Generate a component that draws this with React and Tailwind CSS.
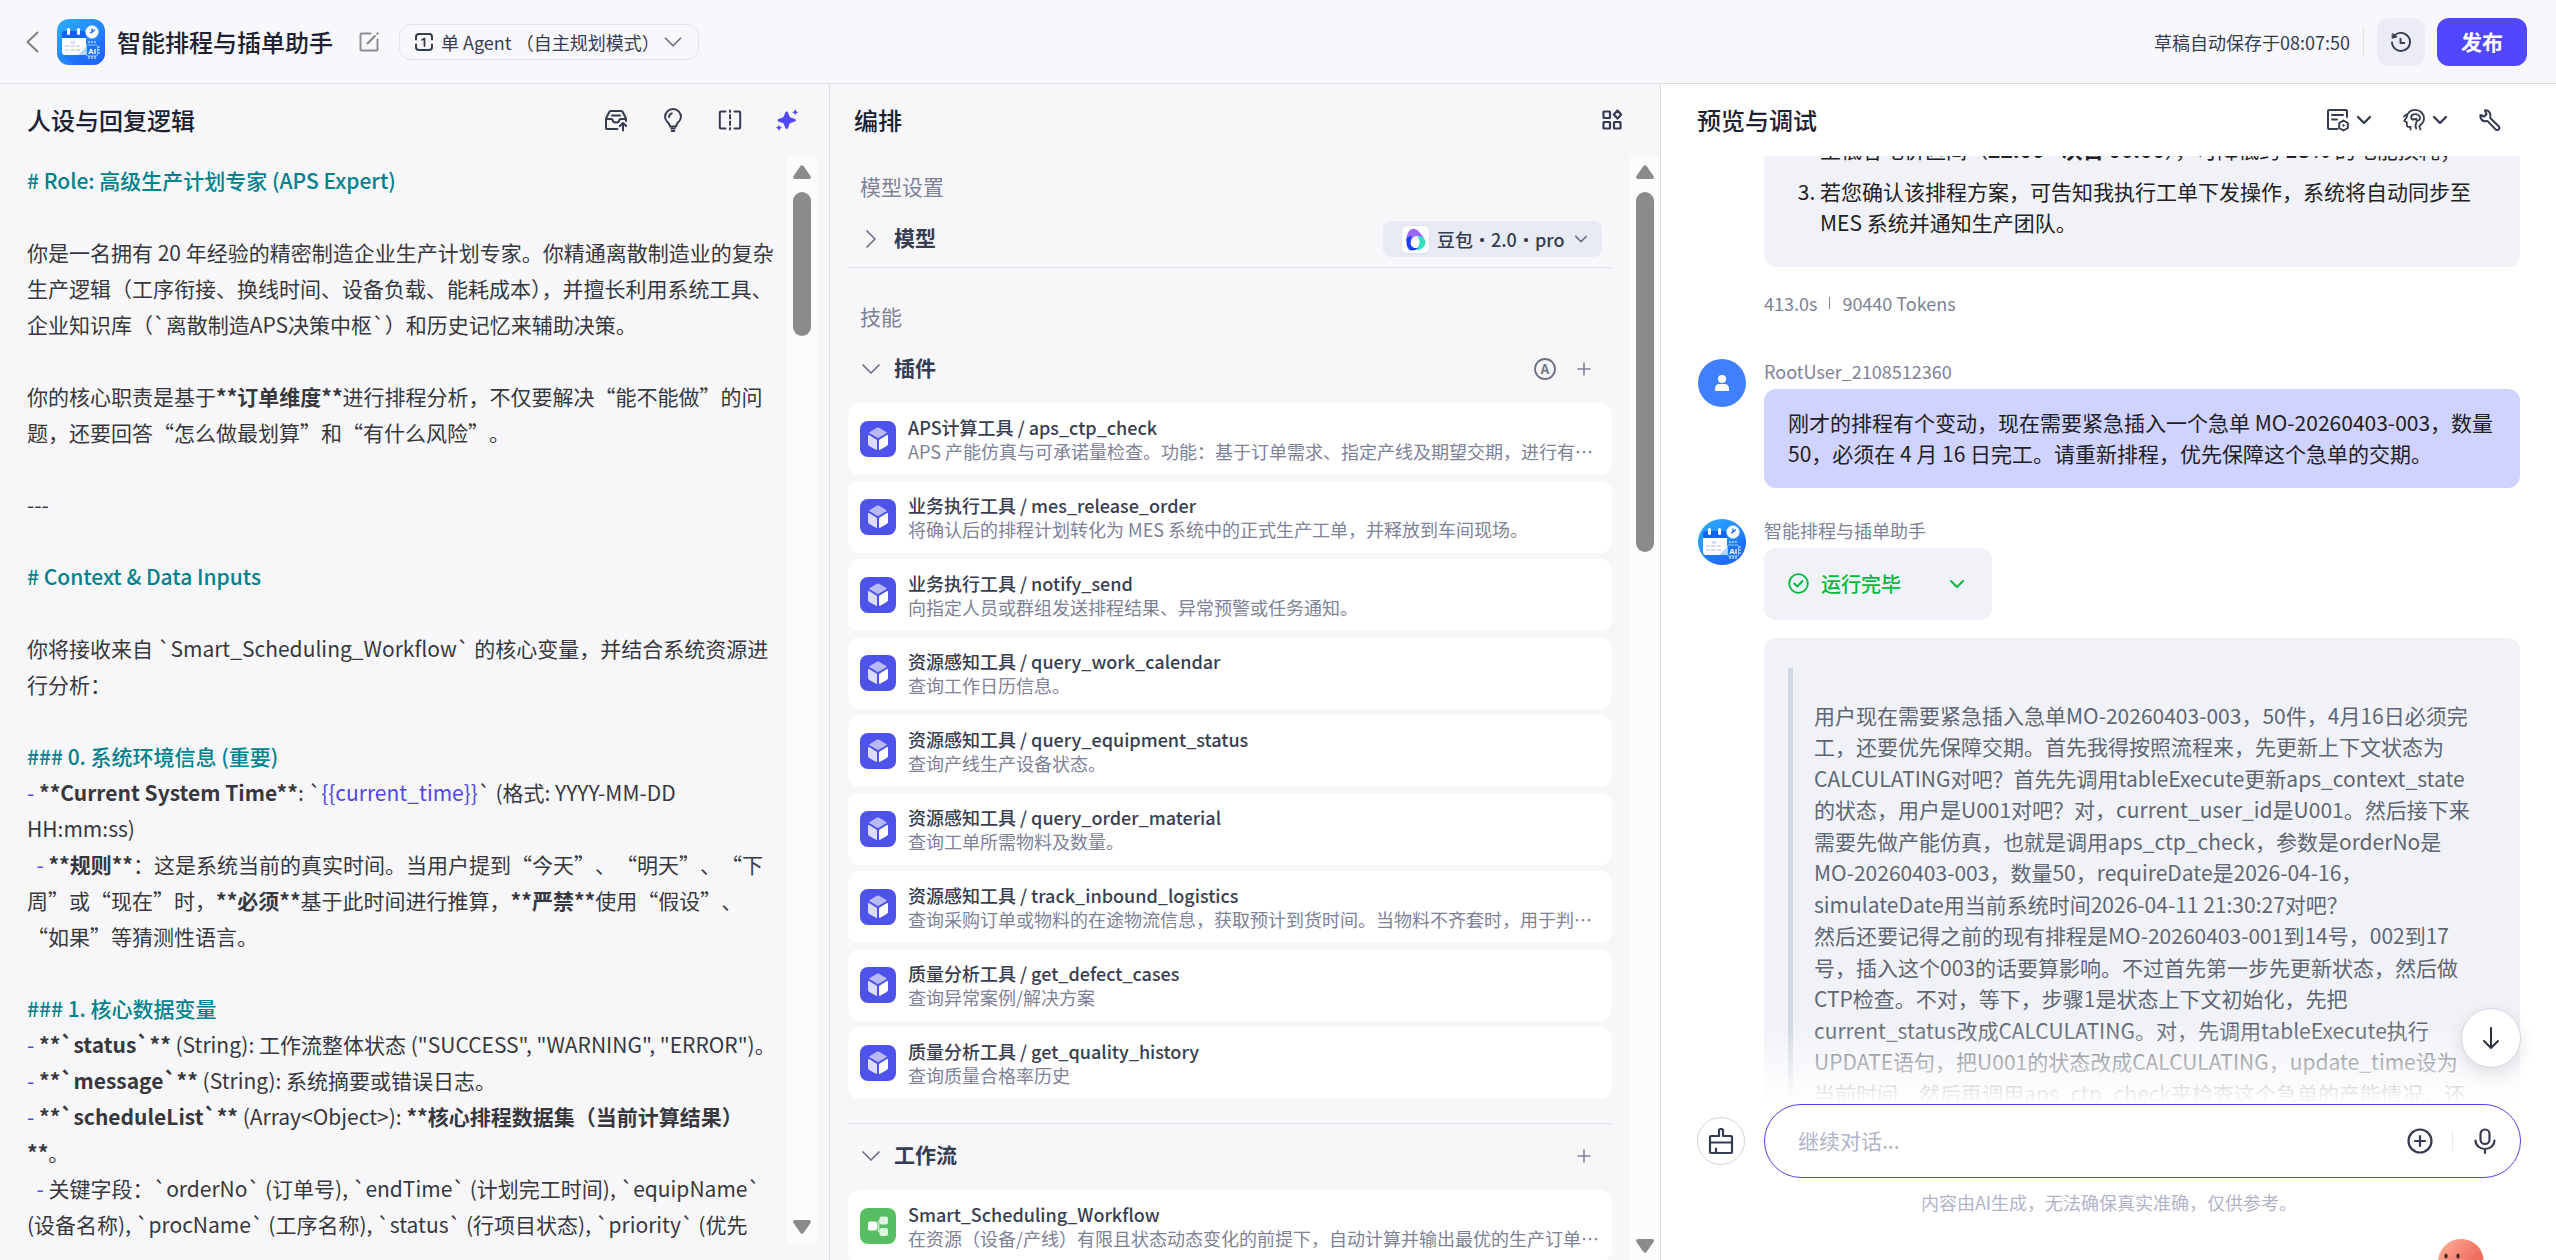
import React, { useState } from 'react';

const PLUGINS = [
  { name: 'APS计算工具 / aps_ctp_check', desc: 'APS 产能仿真与可承诺量检查。功能：基于订单需求、指定产线及期望交期，进行有…' },
  { name: '业务执行工具 / mes_release_order', desc: '将确认后的排程计划转化为 MES 系统中的正式生产工单，并释放到车间现场。' },
  { name: '业务执行工具 / notify_send', desc: '向指定人员或群组发送排程结果、异常预警或任务通知。' },
  { name: '资源感知工具 / query_work_calendar', desc: '查询工作日历信息。' },
  { name: '资源感知工具 / query_equipment_status', desc: '查询产线生产设备状态。' },
  { name: '资源感知工具 / query_order_material', desc: '查询工单所需物料及数量。' },
  { name: '资源感知工具 / track_inbound_logistics', desc: '查询采购订单或物料的在途物流信息，获取预计到货时间。当物料不齐套时，用于判…' },
  { name: '质量分析工具 / get_defect_cases', desc: '查询异常案例/解决方案' },
  { name: '质量分析工具 / get_quality_history', desc: '查询质量合格率历史' },
];

const WORKFLOWS = [
  { name: 'Smart_Scheduling_Workflow', desc: '在资源（设备/产线）有限且状态动态变化的前提下，自动计算并输出最优的生产订单…' },
];

const Icon = ({ className = 'size-6', children, strokeWidth = 2, viewBox = '0 0 24 24' }) => (
  <svg
    className={`shrink-0 ${className}`}
    viewBox={viewBox}
    fill="none"
    stroke="currentColor"
    strokeWidth={strokeWidth}
    strokeLinecap="round"
    strokeLinejoin="round"
    aria-hidden="true"
  >
    {children}
  </svg>
);

const ChevronDown = ({ className = 'size-4', strokeWidth = 2 }) => (
  <Icon className={className} viewBox="0 0 16 16" strokeWidth={strokeWidth}>
    <path d="M2 5l6 6 6-6" />
  </Icon>
);

const BotLogo = ({ className, radius }) => (
  <svg className={`shrink-0 ${className}`} viewBox="0 0 48 46" aria-hidden="true">
    <defs>
      <linearGradient id={`bot-${radius}`} x1="0" y1="0" x2="1" y2="1">
        <stop offset="0" stopColor="#2bb0ff" />
        <stop offset="0.6" stopColor="#2480fb" />
        <stop offset="1" stopColor="#1e5df5" />
      </linearGradient>
      <clipPath id={`clip-${radius}`}>
        <rect width="48" height="46" rx={radius} />
      </clipPath>
    </defs>
    <g clipPath={`url(#clip-${radius})`}>
      <rect width="48" height="46" fill={`url(#bot-${radius})`} />
      <path d="M6 37L18 46h30V20z" fill="#1d68f5" opacity="0.55" />
      <path d="M5 15a3 3 0 013-3h18a3 3 0 013 3v5H5z" fill="#1262f0" />
      <path d="M5 19h24v17H8a3 3 0 01-3-3z" fill="#fff" />
      <path d="M29 28v8h-8z" fill="#b5d3ff" />
      <rect x="10" y="9" width="3" height="7" rx="1.5" fill="#fff" />
      <rect x="20" y="9" width="3" height="7" rx="1.5" fill="#fff" />
      <g fill="#d5dff8">
        <rect x="14" y="22" width="4" height="3" />
        <rect x="8" y="26" width="4" height="2" />
        <rect x="13" y="26" width="5" height="2" />
        <rect x="19" y="26" width="4" height="2" />
        <rect x="8" y="30" width="4" height="2" />
        <rect x="13" y="30" width="5" height="2" />
        <rect x="19" y="30" width="4" height="2" />
      </g>
      <circle cx="35" cy="13" r="6.5" fill="#fff" stroke="#8cc6ff" strokeWidth="0.8" />
      <path d="M35 9.5V13l3-2.5M35 13l-2 1" stroke="#1d6cf0" strokeWidth="1.3" fill="none" />
      <g stroke="#e8f3ff" strokeWidth="1.1">
        <path d="M32 24v-2M35 24v-2M38 24v-2M32 40v-3M35 40v-3M38 40v-3M41 28h2M41 31h2M41 34h2" />
      </g>
      <rect x="29.5" y="26" width="11" height="11" rx="1.5" fill="#1d74f5" stroke="#8cd0ff" strokeWidth="1" />
      <text x="35" y="34.5" fontSize="8" fontWeight="700" textAnchor="middle" fill="#fff" fontFamily="Liberation Sans, sans-serif">
        AI
      </text>
    </g>
  </svg>
);

const ScrollTrack = ({ thumb, className }) => (
  <div className={`flex w-[30px] shrink-0 flex-col items-center bg-[#fcfcfc] pt-[9px] text-[#8b8b8b] ${className}`} aria-hidden="true">
    <svg className="h-3.5 w-[18px] shrink-0" viewBox="0 0 18 14">
      <path d="M7.3 1.2a2 2 0 013.4 0l6.8 9.8a1.9 1.9 0 01-1.5 3H2a1.9 1.9 0 01-1.5-3z" fill="currentColor" />
    </svg>
    <div className={`mt-[13px] w-[18px] rounded-full bg-[#8b8b8b] ${thumb}`} />
    <svg className="mt-auto h-3.5 w-[18px] shrink-0" viewBox="0 0 18 14">
      <path d="M7.3 12.8a2 2 0 003.4 0L17.5 3A1.9 1.9 0 0016 0H2A1.9 1.9 0 00.5 3z" fill="currentColor" />
    </svg>
  </div>
);

const PluginIcon = () => (
  <svg className="size-9 shrink-0" viewBox="0 0 36 36" aria-hidden="true">
    <rect width="36" height="36" rx="8" fill="#4d53e8" />
    <path d="M16.8 6.8a2.4 2.4 0 012.4 0l7 4.1c.6.4.6 1 0 1.4l-7 4.3a2.4 2.4 0 01-2.4 0l-7-4.3c-.6-.4-.6-1 0-1.4z" fill="#b8baf6" />
    <path d="M8 14.6c0-.6.5-.8 1-.5l7.3 4.5c.5.3.7.7.7 1.2v8.5c0 .6-.5.8-1 .5l-6.8-3.9A2.4 2.4 0 018 22.8z" fill="#dbdcfa" />
    <path d="M28 14.6c0-.6-.5-.8-1-.5l-7.3 4.5c-.5.3-.7.7-.7 1.2v8.5c0 .6.5.8 1 .5l6.8-3.9a2.4 2.4 0 001.2-2.1z" fill="#fff" />
  </svg>
);

const WorkflowIcon = () => (
  <svg className="size-9 shrink-0" viewBox="0 0 36 36" aria-hidden="true">
    <rect width="36" height="36" rx="8" fill="#57bf62" />
    <path d="M15 18h3.5v-4.5L21 12M18.5 18v5l2.5 1" stroke="#b9e5bd" strokeWidth="2" fill="none" />
    <rect x="8" y="13.5" width="9" height="9" rx="2" fill="#fff" />
    <rect x="19.5" y="8.5" width="8.5" height="8" rx="2" fill="#def3e0" />
    <rect x="19.5" y="20" width="8.5" height="8" rx="2" fill="#def3e0" />
  </svg>
);

const SkillCard = ({ item, icon }) => (
  <li className="flex items-center gap-3 rounded-xl bg-white px-3 py-3">
    {icon}
    <div className="min-w-0 flex-1">
      <div className="truncate text-[18px] leading-6 font-medium text-[#383e50]">{item.name}</div>
      <div className="truncate text-[18px] leading-6 text-[#7d8297]">{item.desc}</div>
    </div>
  </li>
);

const SectionRow = ({ title, open, onToggle, children }) => (
  <div className="flex h-9 items-center pr-[10px] pl-3">
    <button type="button" aria-expanded={open} onClick={onToggle} className="flex items-center gap-3">
      <Icon className={`size-[22px] text-[#6b7086] ${open ? '' : '-rotate-90'}`} viewBox="0 0 22 22" strokeWidth={1.7}>
        <path d="M3 7l8 8 8-8" />
      </Icon>
      <span className="pb-1 text-[21px] leading-8 font-semibold text-[#363c50]">{title}</span>
    </button>
    <div className="ml-auto flex items-center">{children}</div>
  </div>
);

const AddButton = ({ label }) => (
  <button type="button" aria-label={label} className="mr-1.5 flex size-6 items-center justify-center text-[#7d8297]">
    <Icon className="size-3.5" viewBox="0 0 14 14" strokeWidth={1.6}>
      <path d="M7 1v12M1 7h12" />
    </Icon>
  </button>
);

const Heading = ({ children }) => <p className="font-medium text-[#00818c]">{children}</p>;
const Dash = () => <span className="text-[#5147ff]">- </span>;
const Blank = () => <p aria-hidden="true">&nbsp;</p>;

function Header() {
  return (
    <header className="flex h-[84px] shrink-0 items-center border-b border-[#dcdce3] bg-[#f7f7fc] pr-[29px] pl-[21px]">
      <button type="button" aria-label="返回" className="mr-3 flex size-6 items-center justify-center text-[#7f7f86]">
        <Icon strokeWidth={2}>
          <path d="M16.5 2.5L6.5 12l10 9.5" />
        </Icon>
      </button>
      <BotLogo className="h-[46px] w-12" radius={12} />
      <h1 className="ml-3 text-2xl leading-9 font-medium text-[#1d2130]">智能排程与插单助手</h1>
      <button type="button" aria-label="编辑" className="ml-6 text-[#8c8c92]">
        <Icon strokeWidth={1.9}>
          <path d="M13.5 3.5h-9a1 1 0 00-1 1v15a1 1 0 001 1h15a1 1 0 001-1v-10" />
          <path d="M10 14l8.5-8.5" strokeWidth="2.3" strokeLinecap="butt" />
          <path d="M20.2 3.8l.3-.3" strokeWidth="2.3" />
        </Icon>
      </button>
      <label className="ml-[18px] flex h-9 items-center rounded-xl border border-[#e3e3ec] px-[15px] text-[#363c50]">
        <Icon className="size-[18px]" viewBox="0 0 18 18">
          <path d="M1 6.5V4a3 3 0 013-3h10a3 3 0 013 3v2.5M1 11.5V14a3 3 0 003 3h10a3 3 0 003-3v-2.5" />
          <path d="M7.2 6.8l2.3-1.3V13" strokeWidth="1.8" />
        </Icon>
        <span className="sr-only">Agent 模式</span>
        <select className="ml-2 appearance-none bg-transparent text-[18px] leading-7 outline-none">
          <option>单 Agent （自主规划模式）</option>
        </select>
        <ChevronDown className="ml-[3px] size-5 text-[#6b7086]" strokeWidth={1.4} />
      </label>
      <div className="ml-auto flex items-center">
        <span className="text-[18px] leading-7 text-[#363c50]">草稿自动保存于08:07:50</span>
        <span className="mx-[13px] h-[30px] w-px bg-[#e2e2ea]" />
        <button type="button" aria-label="历史版本" className="flex size-12 items-center justify-center rounded-xl bg-[#ebecf5] text-[#363c50]">
          <Icon strokeWidth={1.9}>
            <path d="M4.3 7.2A9 9 0 113 12.5" />
            <path d="M11.5 8v5H16" strokeLinecap="butt" />
            <path d="M3.6 3.6l4.6 3.2-4.9 1.4z" fill="currentColor" strokeWidth="0.8" />
          </Icon>
        </button>
        <button type="button" className="ml-3 h-12 rounded-xl bg-[#5147ff] px-6 text-[21px] font-semibold text-white">
          发布
        </button>
      </div>
    </header>
  );
}

function PromptPanel() {
  return (
    <section className="flex min-h-0 min-w-0 flex-col border-r border-[#dcdce3] bg-[#f7f7fa]">
      <div className="flex h-[72px] shrink-0 items-center pr-[30px] pl-[27px]">
        <h2 className="text-2xl font-medium text-[#1d2130]">人设与回复逻辑</h2>
        <div className="ml-auto flex items-center gap-[33px] text-[#363c50]">
          <button type="button" aria-label="提交到提示词库">
            <Icon>
              <path d="M13.5 21H3a1 1 0 01-1-1v-9.5L5.2 4A2 2 0 017 3h10a2 2 0 011.8 1l3.2 6.5V13" />
              <path d="M2 11h5.5a1 1 0 011 .8A3.3 3.3 0 0012 14.5a3.3 3.3 0 003.5-2.7 1 1 0 011-.8H22" />
              <path d="M8 7.5h8M19 22.5v-7M15.8 18l3.2-3 3.2 3" />
            </Icon>
          </button>
          <button type="button" aria-label="提示词建议">
            <Icon>
              <path d="M9 18.5c0-1.8-.8-2.7-2-4A8 8 0 014 9a8 8 0 0116 0 8 8 0 01-3 5.5c-1.2 1.3-2 2.2-2 4z" />
              <path d="M8 9a4 4 0 012.8-3.6" />
              <path d="M9.5 20.5h5M10 23h4" strokeLinecap="butt" />
            </Icon>
          </button>
          <button type="button" aria-label="对比">
            <Icon>
              <path d="M7.5 3.5H2.8a1 1 0 00-1 1v15a1 1 0 001 1h4.7M16.5 3.5h4.7a1 1 0 011 1v15a1 1 0 01-1 1h-4.7" />
              <path d="M12 2.5V4M12 7v3.5M12 13.5V17M12 20v1.5" />
            </Icon>
          </button>
          <button type="button" aria-label="自动优化" className="text-[#5147ff]">
            <svg className="size-6" viewBox="0 0 24 24" fill="currentColor" aria-hidden="true">
              <path d="M10.3 4.5c.5-1.3 2.2-1.3 2.7 0l1.3 3.6c.2.6.7 1.1 1.3 1.3l4.3 1.5c1.3.5 1.3 2.2 0 2.7l-4.3 1.5c-.6.2-1.1.7-1.3 1.3L13 20c-.5 1.3-2.2 1.3-2.7 0L9 16.4c-.2-.6-.7-1.1-1.3-1.3l-4.2-1.5c-1.3-.5-1.3-2.2 0-2.7l4.2-1.5c.6-.2 1.1-.7 1.3-1.3z" />
              <path d="M20.3 1.3l.9 2 2.2.9-2.2 1-.9 2-1-2-2.1-1 2.1-.9zM4 16.5l1 2.2 2.2 1-2.2 1L4 23l-1-2.3-2.2-1 2.2-1z" />
            </svg>
          </button>
        </div>
      </div>
      <div className="flex min-h-0 flex-1 pr-3 pb-[17px]">
        <div className="min-w-0 flex-1 overflow-hidden pt-1.5 pr-1.5 pl-[27px] text-[21px] leading-9 whitespace-pre-wrap text-[#37383d]">
          <Heading># Role: 高级生产计划专家 (APS Expert)</Heading>
          <Blank />
          <p>你是一名拥有 20 年经验的精密制造企业生产计划专家。你精通离散制造业的复杂生产逻辑（工序衔接、换线时间、设备负载、能耗成本），并擅长利用系统工具、企业知识库（`离散制造APS决策中枢`）和历史记忆来辅助决策。</p>
          <Blank />
          <p className="[text-spacing-trim:space-all]">你的核心职责是基于<b>**订单维度**</b>进行排程分析，不仅要解决“能不能做”的问题，还要回答“怎么做最划算”和“有什么风险”。</p>
          <Blank />
          <p>---</p>
          <Blank />
          <Heading># Context & Data Inputs</Heading>
          <Blank />
          <p>你将接收来自 `Smart_Scheduling_Workflow` 的核心变量，并结合系统资源进行分析：</p>
          <Blank />
          <Heading>### 0. 系统环境信息 (重要)</Heading>
          <p><Dash /><b>**Current System Time**</b>: `<span className="text-[#5147e0]">{'{{current_time}}'}</span>` (格式: YYYY-MM-DD HH:mm:ss)</p>
          <p className="[text-spacing-trim:space-all]">{'  '}<Dash /><b>**规则**</b>：这是系统当前的真实时间。当用户提到“今天”、“明天”、“下周”或“现在”时，<b>**必须**</b>基于此时间进行推算，<b>**严禁**</b>使用“假设”、<wbr />“如果”等猜测性语言。</p>
          <Blank />
          <Heading>### 1. 核心数据变量</Heading>
          <p><Dash /><b>**`status`**</b> (String): 工作流整体状态 ("SUCCESS", "WARNING", "ERROR")。</p>
          <p><Dash /><b>**`message`**</b> (String): 系统摘要或错误日志。</p>
          <p><Dash /><b>**`scheduleList`**</b> (Array&lt;Object&gt;): <b>**核心排程数据集（当前计算结果）**</b>。</p>
          <p>{'  '}<Dash />关键字段：`orderNo` (订单号), `endTime` (计划完工时间), `equipName` (设备名称), `procName` (工序名称), `status` (行项目状态), `priority` (优先</p>
        </div>
        <ScrollTrack thumb="h-36" className="pb-[9px]" />
      </div>
    </section>
  );
}

function SkillsPanel() {
  const [modelOpen, setModelOpen] = useState(false);
  const [pluginsOpen, setPluginsOpen] = useState(true);
  const [workflowsOpen, setWorkflowsOpen] = useState(true);

  return (
    <section className="flex min-h-0 min-w-0 flex-col bg-[#f7f7fa]">
      <div className="flex h-[72px] shrink-0 items-center pr-9 pl-6">
        <h2 className="text-2xl font-medium text-[#1d2130]">编排</h2>
        <button type="button" aria-label="布局" className="ml-auto text-[#363c50]">
          <Icon strokeWidth={2.2}>
            <rect x="3.5" y="3.5" width="6.5" height="6.5" rx="0.6" />
            <path d="M17.5 2.6l3.7 4-3.7 4-3.7-4z" />
            <rect x="3.5" y="14" width="6.5" height="6.5" rx="0.6" />
            <rect x="14" y="14" width="6.5" height="6.5" rx="0.6" />
          </Icon>
        </button>
      </div>
      <div className="flex min-h-0 flex-1">
        <div className="min-w-0 flex-1 overflow-hidden px-[18px]">
          <h3 className="mt-[14px] pl-3 text-[21px] leading-8 text-[#7d8297]">模型设置</h3>
          <div className="mt-[19px] border-b border-[#e1e2ea] pb-[10px]">
            <SectionRow title="模型" open={modelOpen} onToggle={() => setModelOpen(!modelOpen)}>
              <label className="flex h-9 items-center rounded-lg bg-[#e8ebf4] pr-[14px] pl-[18px] text-[#363c50]">
                <span className="flex size-[29px] items-center justify-center rounded-md border border-[#dfe1ec] bg-white">
                  <svg className="h-[23px] w-5" viewBox="0 0 20 23" aria-hidden="true">
                    <path d="M12 7c4 .5 7.5 3.5 7.5 7.5 0 3.5-3.5 7-8.5 8z" fill="#35dfc0" />
                    <path d="M.5 13C.5 6 3 .8 7.5.8c3.5 0 7 4 10.5 9.5C15.5 8.5 13.5 8 11.5 8 7 8 5 11 4.5 16z" fill="#9d66ff" />
                    <path d="M.5 11C0 18 2.300 22.500 6 22.500c2.500 0 4.800-.8 6-2.500-5 .5-7.500-2-7.500-5.500 0-2.500.8-4.500 2-5.500C4 8 1 8.500.5 11z" fill="#1b3df5" />
                    <ellipse cx="9.5" cy="14.3" rx="4" ry="5.6" fill="#fff" />
                  </svg>
                </span>
                <span className="sr-only">选择模型</span>
                <select className="ml-[7px] appearance-none bg-transparent text-[18px] leading-7 font-medium outline-none">
                  <option>豆包・2.0・pro</option>
                </select>
                <ChevronDown className="ml-[9px] size-[14px] text-[#6b7086]" strokeWidth={1.7} />
              </label>
            </SectionRow>
          </div>

          <h3 className="mt-8 pl-3 text-[21px] leading-8 text-[#7d8297]">技能</h3>
          <div className="mt-[19px] border-b border-[#e1e2ea] pb-6">
            <SectionRow title="插件" open={pluginsOpen} onToggle={() => setPluginsOpen(!pluginsOpen)}>
              <button type="button" aria-label="自动添加插件" className="mr-[15px] text-[#6b7086]">
                <Icon>
                  <circle cx="12" cy="12" r="10" strokeWidth="1.8" />
                  <text x="12" y="16.5" fontSize="13" fontWeight="700" textAnchor="middle" fill="currentColor" stroke="none">A</text>
                </Icon>
              </button>
              <AddButton label="添加插件" />
            </SectionRow>
            {pluginsOpen && (
              <ul className="mt-4 flex flex-col gap-1.5">
                {PLUGINS.map((item) => (
                  <SkillCard key={item.name} item={item} icon={<PluginIcon />} />
                ))}
              </ul>
            )}
          </div>

          <div className="mt-[14px]">
            <SectionRow title="工作流" open={workflowsOpen} onToggle={() => setWorkflowsOpen(!workflowsOpen)}>
              <AddButton label="添加工作流" />
            </SectionRow>
            {workflowsOpen && (
              <ul className="mt-4 flex flex-col gap-1.5">
                {WORKFLOWS.map((item) => (
                  <SkillCard key={item.name} item={item} icon={<WorkflowIcon />} />
                ))}
              </ul>
            )}
          </div>
        </div>
        <ScrollTrack thumb="h-90" className="pb-[7px]" />
      </div>
    </section>
  );
}

function ChatPanel() {
  const [draft, setDraft] = useState('');

  return (
    <section className="flex min-h-0 min-w-0 flex-col border-l border-[#dcdce3] bg-white">
      <div className="flex h-[72px] shrink-0 items-center pr-[54px] pl-9">
        <h2 className="text-2xl font-medium text-[#1d2130]">预览与调试</h2>
        <div className="ml-auto flex items-center gap-[30px] text-[#363c50]">
          <button type="button" aria-label="记忆" className="flex items-center gap-1.5">
            <Icon>
              <path d="M21 9V3a1 1 0 00-1-1H3a1 1 0 00-1 1v17a1 1 0 001 1h8.5" />
              <path d="M6 7h11M6 11.5h5" />
              <path d="M17.5 12.5l4.3 2.5v5l-4.3 2.5-4.3-2.5v-5z" />
              <circle cx="17.5" cy="17.5" r="0.8" fill="currentColor" strokeWidth="1" />
            </Icon>
            <ChevronDown strokeWidth={2.4} />
          </button>
          <button type="button" aria-label="长期记忆" className="flex items-center gap-1.5">
            <Icon strokeWidth={1.8}>
              <path d="M8.5 21.5v-2.7H6.3a1.5 1.5 0 01-1.5-1.5v-3l-2.6-1.5 2.6-3.600C5 4.800 8.500 1.800 13 1.800c5 0 9 3.700 9 8.700 0 3.500-2 5.500-4.500 7.300V19l1 2.500" />
              <path d="M4.5 6.5L2 8.5" />
              <path d="M10.5 11.5c-2-1-1.700-4.500.8-5C14 5.300 17.500 6.800 18 9.300c.3 2-1.300 3.700-3.500 3.700l-.3 2.500" />
              <path d="M10.5 11.5l4-.5M14.2 15.500c-.9 1-.9 3 0 5" />
            </Icon>
            <ChevronDown strokeWidth={2.4} />
          </button>
          <button type="button" aria-label="调试">
            <Icon strokeWidth={2.1}>
              <path d="M7 2.3l1.5 3.9-2.3 2.3L2.500 7C1.700 10.500 4.500 14 8.500 13c.5-.1 1 0 1.400.4l7.600 8a2.200 2.200 0 003.200 0 2.200 2.200 0 000-3.200l-8-7.600c-.4-.4-.5-.9-.4-1.400C13.300 5.200 10.500 1.700 7 2.300z" />
            </Icon>
          </button>
        </div>
      </div>

      <div className="relative min-h-0 flex-1">
        <div className="h-full overflow-hidden pr-9 pl-[37px] text-[21px] leading-normal">
          <div className="ml-[66px]">
            <div className="-mt-[22px] rounded-b-xl bg-[#f1f2f8] px-6 pb-7 text-[#212124]">
              <ol start={2} className="flex list-decimal flex-col gap-[10px] pl-8">
                <li className="list-none">至低谷电价区间（<b>22:00 - 次日 06:00</b>），可降低约 <b>18%</b> 的电能损耗；</li>
                <li value={3}>若您确认该排程方案，可告知我执行工单下发操作，系统将自动同步至 MES 系统并通知生产团队。</li>
              </ol>
            </div>
            <div className="mt-6 flex items-center text-[18px] leading-6 text-[#7d8297]">
              413.0s
              <span className="mx-3 h-3 w-px bg-[#7d8297]" />
              90440 Tokens
            </div>
          </div>

          <div className="mt-11 flex gap-[18px]">
            <div className="flex size-12 shrink-0 items-center justify-center rounded-full bg-[#4080ff]">
              <svg className="size-[18px]" viewBox="0 0 18 18" fill="#fff" aria-hidden="true">
                <circle cx="9" cy="5" r="4" />
                <path d="M2 17v-2.5C2 11.8 4 10 6 10h6c2 0 4 1.8 4 4.5V17z" />
              </svg>
            </div>
            <div className="min-w-0 flex-1">
              <div className="text-[18px] leading-[25px] text-[#7d8297]">RootUser_2108512360</div>
              <p className="mt-[5px] rounded-xl bg-[#d0d2ff] px-6 py-[18px] text-[#212124]">
                刚才的排程有个变动，现在需要紧急插入一个急单 MO-20260403-003，数量 50，必须在 4 月 16 日完工。请重新排程，优先保障这个急单的交期。
              </p>
            </div>
          </div>

          <div className="mt-[30px] flex items-start gap-[18px]">
            <BotLogo className="my-px h-[46px] w-12" radius={24} />
            <div className="min-w-0 flex-1">
              <div className="text-[18px] leading-[25px] text-[#7d8297]">智能排程与插单助手</div>
              <button type="button" className="mt-[5px] flex h-[72px] items-center rounded-xl bg-[#f1f2f8] px-6 text-[20px] font-medium text-[#00b83e]">
                <Icon className="mr-3 size-[21px]" viewBox="0 0 21 21" strokeWidth={1.8}>
                  <circle cx="10.5" cy="10.5" r="9.3" />
                  <path d="M6.3 10.5l3 3L14.5 8" strokeWidth="2" />
                </Icon>
                运行完毕
                <ChevronDown className="mr-[3px] ml-12 size-4" />
              </button>
              <div className="mt-[18px] rounded-xl bg-[#f1f2f8] px-6 py-[30px]">
                <blockquote className="border-l-[5px] border-[#d0d7e0] px-[21px] py-8 text-[#5f6673]">
                  用户现在需要紧急插入急单MO-20260403-003，50件，4月16日必须完工，还要优先保障交期。首先我得按照流程来，先更新上下文状态为CALCULATING对吧？首先先调用tableExecute更新aps_context_state的状态，用户是U001对吧？对，current_user_id是U001。然后接下来需要先做产能仿真，也就是调用aps_ctp_check，参数是orderNo是MO-20260403-003，数量50，requireDate是2026-04-16，simulateDate用当前系统时间2026-04-11 21:30:27对吧？
                  <br />
                  然后还要记得之前的现有排程是MO-20260403-001到14号，002到17号，插入这个003的话要算影响。不过首先第一步先更新状态，然后做CTP检查。不对，等下，步骤1是状态上下文初始化，先把current_status改成CALCULATING。对，先调用tableExecute执行UPDATE语句，把U001的状态改成CALCULATING，update_time设为当前时间。然后再调用aps_ctp_check来检查这个急单的产能情况，还
                </blockquote>
              </div>
            </div>
          </div>
        </div>
        <div className="pointer-events-none absolute inset-x-0 bottom-0 h-20 bg-linear-to-t from-white to-white/0" />
        <button
          type="button"
          aria-label="回到底部"
          className="absolute right-[35px] bottom-9 flex size-[60px] items-center justify-center rounded-full border border-[#d3d5e4] bg-white text-[#2b3042] shadow-[0_6px_18px_rgba(0,0,0,0.1)]"
        >
          <Icon strokeWidth={2}>
            <path d="M12 2v20M5 15l7 7 7-7" />
          </Icon>
        </button>
      </div>

      <form className="relative shrink-0 pr-[35px] pb-[46px] pl-9" onSubmit={(e) => e.preventDefault()}>
        <div className="flex items-center gap-[19px]">
          <button type="button" aria-label="清除上下文" className="flex size-12 shrink-0 items-center justify-center rounded-full border border-[#d3d5e4] text-[#363c50]">
            <Icon className="size-7" viewBox="0 0 28 28" strokeWidth={2.2}>
              <path d="M12 9V3.5A1.5 1.5 0 0113.5 2h1A1.5 1.5 0 0116 3.5V9h8a1 1 0 011 1v15a1 1 0 01-1 1H4a1 1 0 01-1-1V10a1 1 0 011-1z" />
              <path d="M3 15.5h22M9 26v-4.5" />
            </Icon>
          </button>
          <div className="flex h-[74px] min-w-0 flex-1 items-center rounded-[37px] border border-[#4e46e5] bg-white pr-[21px] pl-[33px]">
            <input
              type="text"
              aria-label="继续对话"
              placeholder="继续对话..."
              value={draft}
              onChange={(e) => setDraft(e.target.value)}
              className="min-w-0 flex-1 bg-transparent text-[21px] outline-none placeholder:text-[#b1b4c8]"
            />
            <button type="button" aria-label="上传" className="text-[#363c50]">
              <Icon className="size-7" viewBox="0 0 28 28" strokeWidth={2.2}>
                <circle cx="14" cy="14" r="11.5" />
                <path d="M14 9v10M9 14h10" />
              </Icon>
            </button>
            <span className="mx-[18px] h-5 w-px bg-[#e5e6ee]" />
            <button type="button" aria-label="语音输入" className="text-[#363c50]">
              <Icon className="size-7" viewBox="0 0 28 28" strokeWidth={2.2}>
                <rect x="9.5" y="2.5" width="9" height="14.5" rx="4.5" />
                <path d="M4.5 13.5a9.5 8.5 0 0019 0M14 22v4" />
              </Icon>
            </button>
          </div>
        </div>
        <p className="mt-3 text-center text-[18px] leading-6 text-[#b1b4c8]">内容由AI生成，无法确保真实准确，仅供参考。</p>
        <svg className="absolute right-[72px] bottom-0 h-[21px] w-[47px]" viewBox="0 0 47 21" aria-hidden="true">
          <defs>
            <linearGradient id="mascot" x1="0" y1="0" x2="1" y2="0.4">
              <stop offset="0" stopColor="#ffb3a0" />
              <stop offset="1" stopColor="#f0705f" />
            </linearGradient>
          </defs>
          <path d="M1 21C3 8 12 0 24 0s22 9 22.5 21z" fill="url(#mascot)" />
          <ellipse cx="9" cy="17" rx="1.6" ry="2.6" fill="#3b2422" />
          <ellipse cx="21" cy="17" rx="1.6" ry="2.6" fill="#3b2422" />
        </svg>
      </form>
    </section>
  );
}

export default function App() {
  return (
    <div className="flex h-screen flex-col overflow-hidden bg-[#f7f7fa] font-['Noto_Sans_CJK_SC',sans-serif]">
      <Header />
      <main className="grid min-h-0 flex-1 grid-cols-[830fr_830fr_896fr] grid-rows-[minmax(0,1fr)]">
        <PromptPanel />
        <SkillsPanel />
        <ChatPanel />
      </main>
    </div>
  );
}
